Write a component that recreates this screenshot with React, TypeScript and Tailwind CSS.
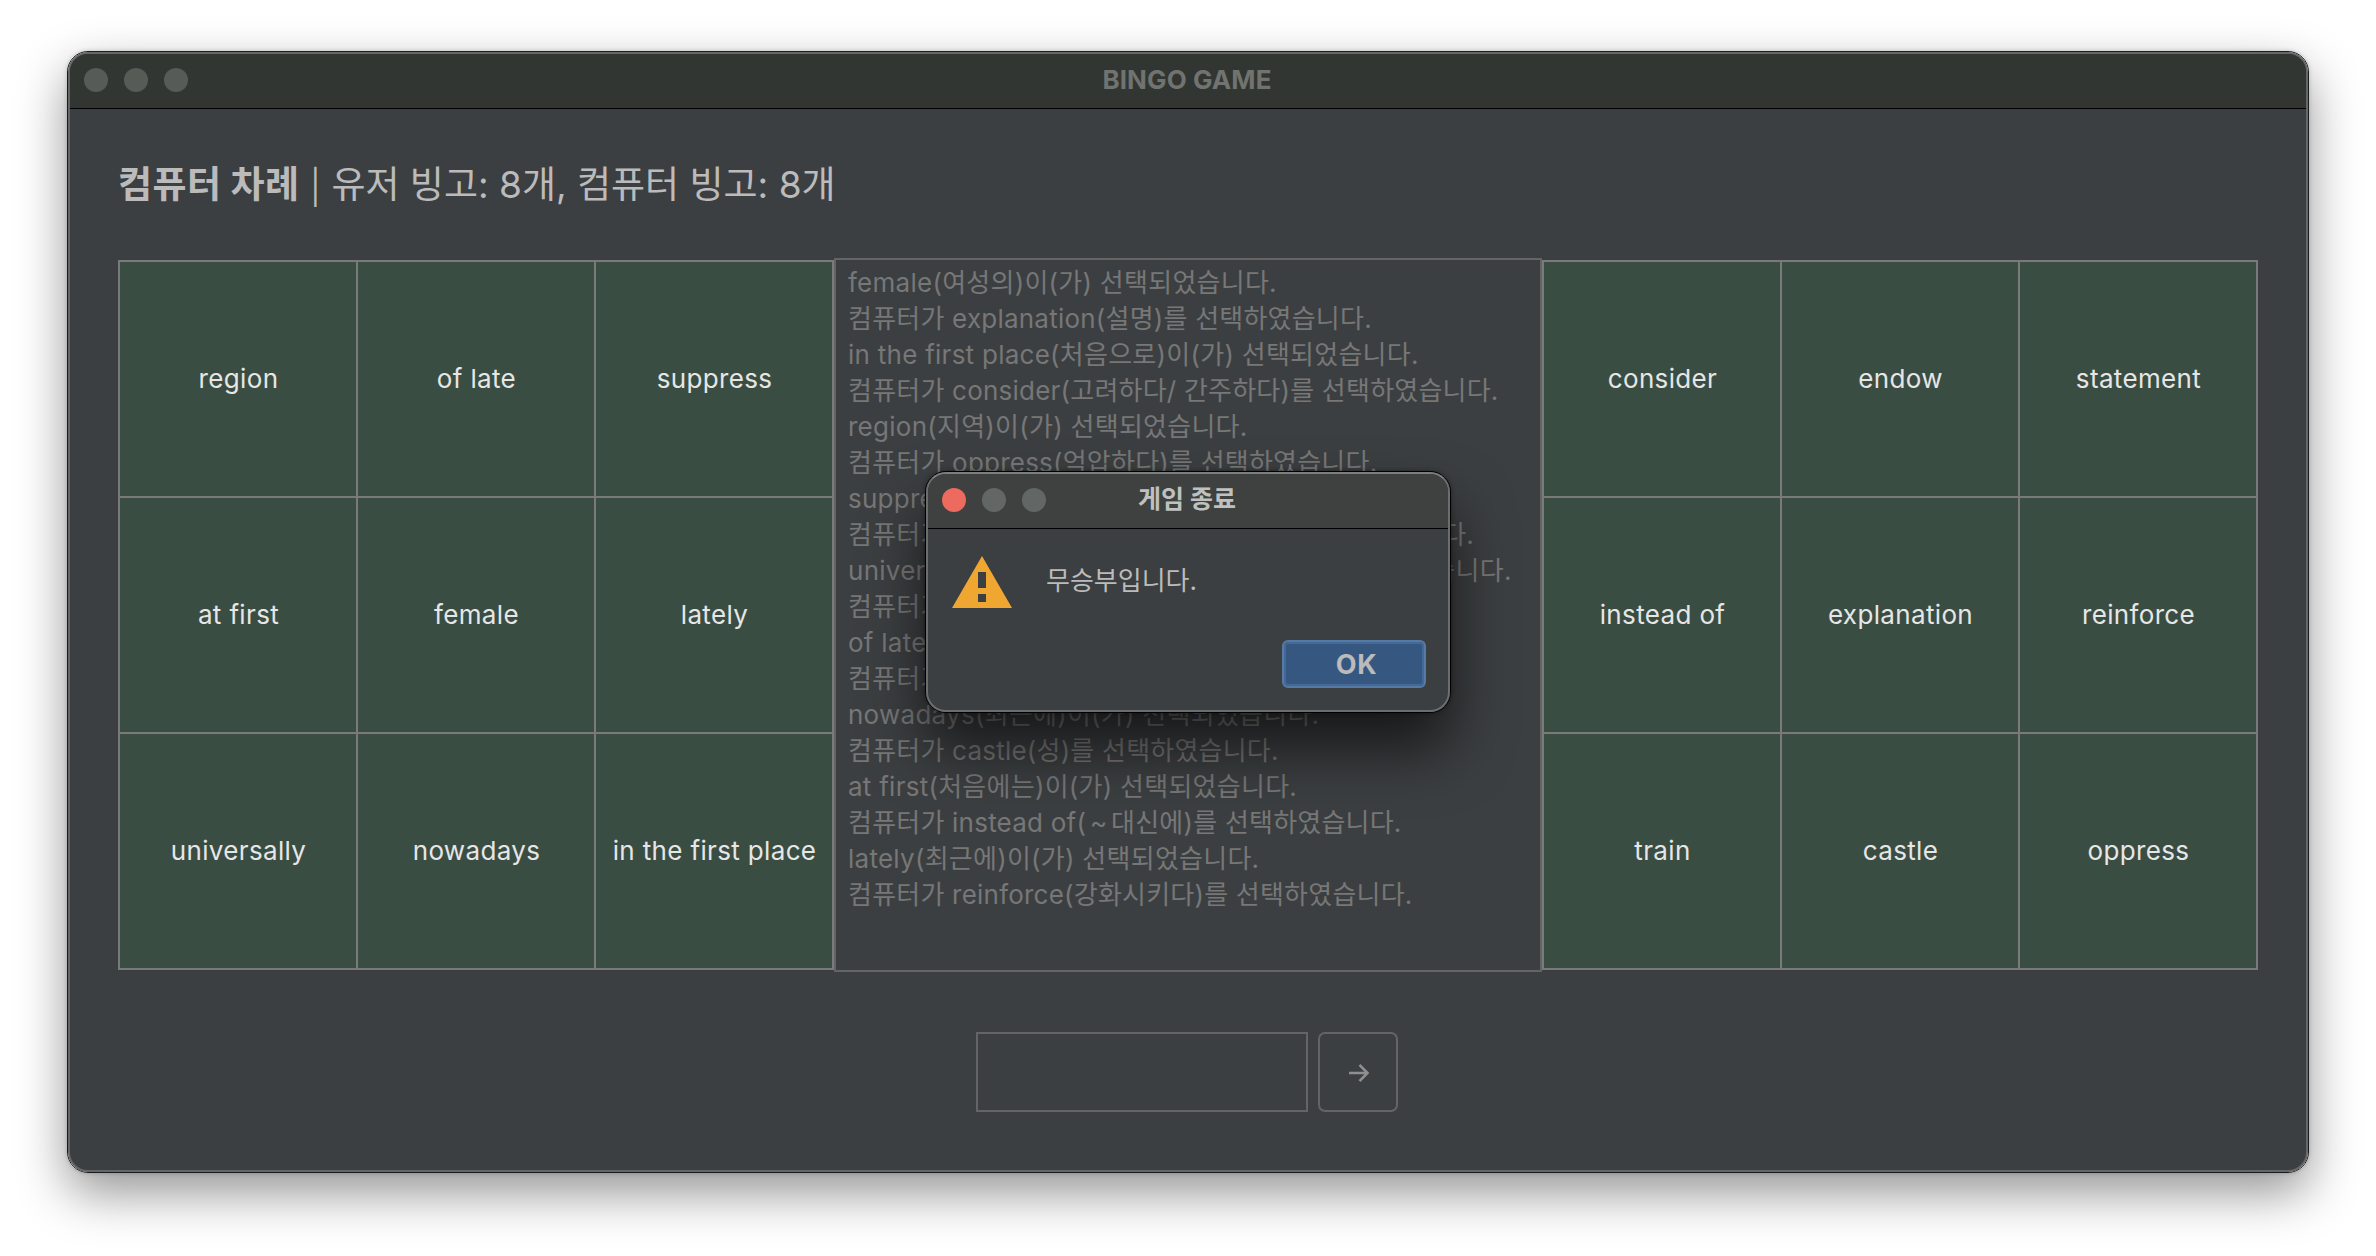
const userWords = [
  'region', 'of late', 'suppress',
  'at first', 'female', 'lately',
  'universally', 'nowadays', 'in the first place',
];

const computerWords = [
  'consider', 'endow', 'statement',
  'instead of', 'explanation', 'reinforce',
  'train', 'castle', 'oppress',
];

const log = [
  'female(여성의)이(가) 선택되었습니다.',
  '컴퓨터가 explanation(설명)를 선택하였습니다.',
  'in the first place(처음으로)이(가) 선택되었습니다.',
  '컴퓨터가 consider(고려하다/ 간주하다)를 선택하였습니다.',
  'region(지역)이(가) 선택되었습니다.',
  '컴퓨터가 oppress(억압하다)를 선택하였습니다.',
  'suppress(억압하다)이(가) 선택되었습니다.',
  '컴퓨터가 endow(기부하다/ 부여하다)를 선택하였습니다.',
  'universally(일반적으로, 보편적으로)이(가) 선택되었습니다.',
  '컴퓨터가 train(훈련하다)를 선택하였습니다.',
  'of late(최근에)이(가) 선택되었습니다.',
  '컴퓨터가 statement(진술)를 선택하였습니다.',
  'nowadays(최근에)이(가) 선택되었습니다.',
  '컴퓨터가 castle(성)를 선택하였습니다.',
  'at first(처음에는)이(가) 선택되었습니다.',
  '컴퓨터가 instead of(~대신에)를 선택하였습니다.',
  'lately(최근에)이(가) 선택되었습니다.',
  '컴퓨터가 reinforce(강화시키다)를 선택하였습니다.',
];

function LogLine({ text }: { text: string }) {
  const [before, after] = text.split('~');
  return (
    <p className={`h-9 ${text.startsWith('컴퓨터가') ? 'tracking-[0.22px]' : 'tracking-[0.26px]'}`}>
      {before}
      {after && <span className="inline-block w-[25px] text-center">~</span>}
      {after}
    </p>
  );
}

function Board({ words }: { words: string[] }) {
  return (
    <div className="mt-[2px] grid h-[710px] w-[716px] grid-cols-3 grid-rows-3 gap-[2px] border-2 border-[#7a7a7a] bg-[#7a7a7a]">
      {words.map((word) => (
        <div key={word} className="flex items-center justify-center bg-[#3a4d42] pb-[2px] pl-px text-[26px] tracking-[0.35px] whitespace-nowrap text-[#e6e6e6]">
          {word}
        </div>
      ))}
    </div>
  );
}

function Lights({ close }: { close?: boolean }) {
  const off = close ? 'bg-[#626665]' : 'bg-[#565b56]';
  return (
    <div className="flex flex-1 gap-4 pl-[14px]">
      <span className={`size-6 rounded-full ${close ? 'bg-[#ec6a5e]' : 'bg-[#565b56]'}`} />
      <span className={`size-6 rounded-full ${off}`} />
      <span className={`size-6 rounded-full ${off}`} />
    </div>
  );
}

function Dialog() {
  return (
    <div className="absolute top-[471px] left-[925px] h-[242px] w-[526px] rounded-[21px] border border-black bg-[#3c3f41] shadow-[0_0_4px_rgba(0,0,0,0.4),0_36px_60px_rgba(0,0,0,0.62)]">
      <div className="flex size-full flex-col overflow-hidden rounded-[20px] border-2 border-[#6b6d6e] border-t-[#7c7f7d]">
        <div className="flex h-[55px] shrink-0 items-center border-b border-black bg-[#3e413f] pb-[2px]">
          <Lights close />
          <span className="pr-[2px] pb-px text-[25px] font-bold text-[#bfc1c0]">게임 종료</span>
          <span className="flex-1 pr-[14px]" />
        </div>
        <div className="flex pt-[27px] pl-6">
          <svg width="60" height="52" viewBox="0 0 60 52" className="shrink-0">
            <path fill="#f0a732" fillRule="evenodd" d="M30 0 60 52H0ZM26 16v16h8V16ZM26 38v8h8v-8Z" />
          </svg>
          <span className="mt-[7px] ml-[34px] text-[26px] leading-[36px] text-[#bbbbbb]">무승부입니다.</span>
        </div>
        <div className="mt-8 flex justify-end pr-[22px]">
          <button className="h-12 w-36 rounded-[6px] border-2 border-[#557ba5] bg-[#365880] pl-[5px] text-[27px] leading-none font-bold tracking-[0.6px] text-[#bbbbbb] inset-ring-2 inset-ring-[#43699a]">
            OK
          </button>
        </div>
      </div>
    </div>
  );
}

export default function App() {
  return (
    <div className="relative h-[1256px] w-[2376px] overflow-hidden bg-white px-[67px] pt-[51px] font-['Inter','Noto_Sans_CJK_KR',sans-serif]">
      <div className="h-[1122px] w-[2242px] rounded-[21px] border border-[#1c1c1c] shadow-[0_0_4px_rgba(0,0,0,0.2),0_20px_50px_rgba(0,0,0,0.42)]">
        <div className="flex size-full flex-col overflow-hidden rounded-[20px] border-2 border-[#656667] bg-[#3c3f41]">
          <div className="flex h-[55px] shrink-0 items-center border-b border-black bg-[#323632] pb-[2px]">
            <Lights />
            <span className="pr-[2px] pb-[2px] text-[26px] font-bold tracking-[0.1px] text-[#707370]">BINGO GAME</span>
            <span className="flex-1 pr-[14px]" />
          </div>
          <div className="px-12">
            <h1 className="flex h-[149px] items-center pt-[2px] text-[37px] leading-[54px] whitespace-pre text-[#bbbbbb]">
              <b className="tracking-[0.4px]">컴퓨터 차례</b>
              <span className="w-8 pb-[7px] text-center font-['Noto_Sans_CJK_KR',sans-serif] text-[36px]">|</span>
              <span>유저 빙고: 8개, 컴퓨터 빙고: 8개</span>
            </h1>
            <div className="flex">
              <Board words={userWords} />
              <div className="h-[714px] w-[708px] border-2 border-[#646464] pt-[5px] pl-3 text-[26px] leading-[36px] whitespace-nowrap text-[#777777]">
                {log.map((line) => (
                  <LogLine key={line} text={line} />
                ))}
              </div>
              <Board words={computerWords} />
            </div>
            <div className="mt-[60px] flex justify-center gap-[10px] pr-[2px]">
              <div className="h-20 w-[332px] border-2 border-[#646464]" />
              <button className="flex size-20 items-center justify-center rounded-[7px] border-2 border-[#646464]">
                <svg width="22" height="20" viewBox="0 0 22 20" fill="none" stroke="#8f8f8f" strokeWidth="2.6" className="mt-px ml-[2px]">
                  <path d="M1 10H20M11.5 1.8l8 8.2-8 8.2" />
                </svg>
              </button>
            </div>
          </div>
        </div>
      </div>
      <Dialog />
    </div>
  );
}
